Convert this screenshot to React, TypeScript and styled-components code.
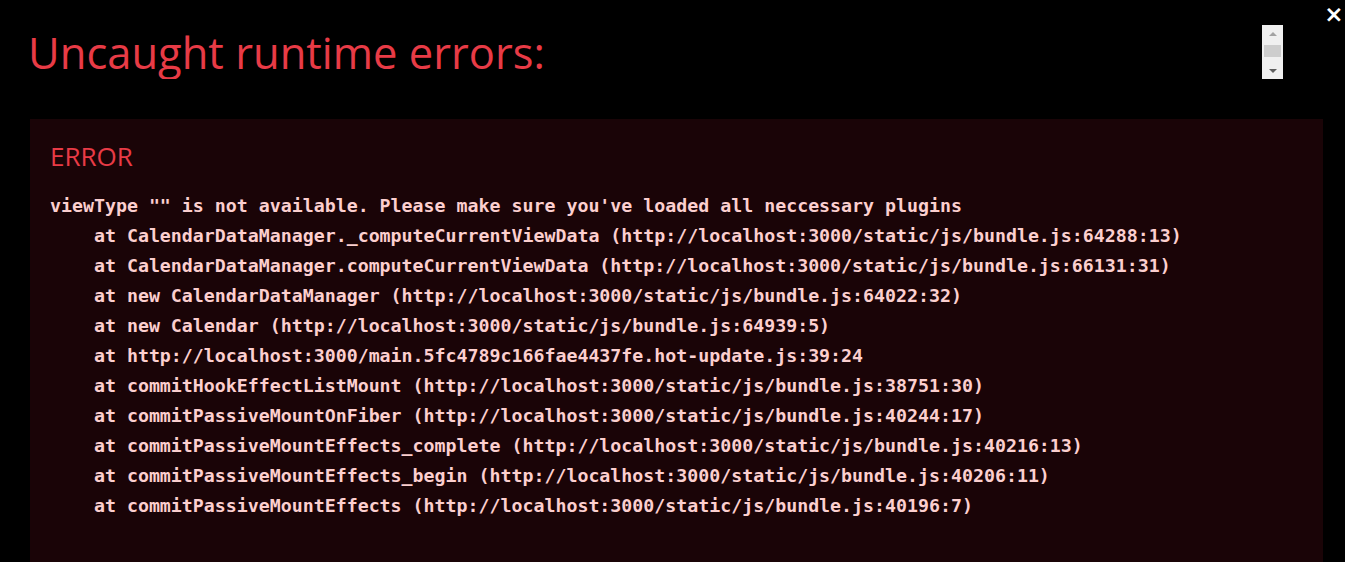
import React from "react";
import styled, { createGlobalStyle } from "styled-components";

const Global = createGlobalStyle`
  html, body { margin: 0; padding: 0; background: #000; }
  body { width: 1345px; height: 562px; overflow: hidden; }
`;

const Overlay = styled.div`
  position: relative;
  box-sizing: border-box;
  width: 1345px;
  height: 562px;
  overflow: hidden;
  background: #000;
  padding: 25px 22px 0 30px;
  display: flex;
  flex-direction: column;
`;

const Header = styled.div`
  display: flex;
  align-items: stretch;
  height: 54px;
  margin: 0 40px 40px 0;
`;

const Title = styled.h1`
  flex: 1;
  margin: 0;
  color: #e83b46;
  font-family: "Open Sans", "Noto Sans", sans-serif;
  font-weight: 400;
  font-size: 43.5px;
  line-height: 56px;
  white-space: pre;
  overflow: hidden;
  margin-left: -2px;
`;

const Scrollbar = styled.div`
  width: 21px;
  background: #f0f0f0;
  display: flex;
  flex-direction: column;
  align-items: center;
`;

const Arrow = styled.div<{ $down?: boolean }>`
  height: 17px;
  width: 100%;
  display: flex;
  align-items: center;
  justify-content: center;
  &::before {
    content: "";
    width: 0;
    height: 0;
    border-left: 4px solid transparent;
    border-right: 4px solid transparent;
    ${(p) =>
      p.$down
        ? "border-top: 4px solid #606060;"
        : "border-bottom: 4px solid #a3a3a3;"}
  }
`;

const Thumb = styled.div`
  width: 17px;
  height: 12px;
  background: #cdcdcd;
  margin: 3px 0 5px;
`;

const Close = styled.button`
  position: absolute;
  top: 2px;
  right: 0px;
  padding: 0;
  width: 22px;
  height: 24px;
  border: none;
  background: transparent;
  color: #fff;
  font-family: "DejaVu Sans", sans-serif;
  font-weight: 700;
  font-size: 23px;
  line-height: 24px;
  cursor: pointer;
`;

const Message = styled.div`
  flex: 1;
  background: #1a0407;
  color: #fccfcf;
  padding: 20px 20px 30px 20px;
`;

const MsgType = styled.div`
  color: #e83b46;
  font-family: "Open Sans", "Noto Sans", sans-serif;
  font-size: 26px;
  line-height: 34px;
  margin-bottom: 18px;
`;

const MsgText = styled.pre`
  margin: 0;
  font-family: "DejaVu Sans Mono", "Liberation Mono", monospace;
  font-size: 18.25px;
  line-height: 30px;
  font-weight: 700;
  white-space: pre;
`;

const lines = [
  `viewType "" is not available. Please make sure you've loaded all neccessary plugins`,
  `    at CalendarDataManager._computeCurrentViewData (http://localhost:3000/static/js/bundle.js:64288:13)`,
  `    at CalendarDataManager.computeCurrentViewData (http://localhost:3000/static/js/bundle.js:66131:31)`,
  `    at new CalendarDataManager (http://localhost:3000/static/js/bundle.js:64022:32)`,
  `    at new Calendar (http://localhost:3000/static/js/bundle.js:64939:5)`,
  `    at http://localhost:3000/main.5fc4789c166fae4437fe.hot-update.js:39:24`,
  `    at commitHookEffectListMount (http://localhost:3000/static/js/bundle.js:38751:30)`,
  `    at commitPassiveMountOnFiber (http://localhost:3000/static/js/bundle.js:40244:17)`,
  `    at commitPassiveMountEffects_complete (http://localhost:3000/static/js/bundle.js:40216:13)`,
  `    at commitPassiveMountEffects_begin (http://localhost:3000/static/js/bundle.js:40206:11)`,
  `    at commitPassiveMountEffects (http://localhost:3000/static/js/bundle.js:40196:7)`,
];

export default function App() {
  return (
    <>
      <Global />
      <Overlay>
        <Header>
          <Title>Uncaught runtime errors:</Title>
          <Scrollbar>
            <Arrow />
            <Thumb />
            <Arrow $down />
          </Scrollbar>
        </Header>
        <Close aria-label="Dismiss">×</Close>
        <Message>
          <MsgType>ERROR</MsgType>
          <MsgText>{lines.join("\n")}</MsgText>
        </Message>
      </Overlay>
    </>
  );
}
